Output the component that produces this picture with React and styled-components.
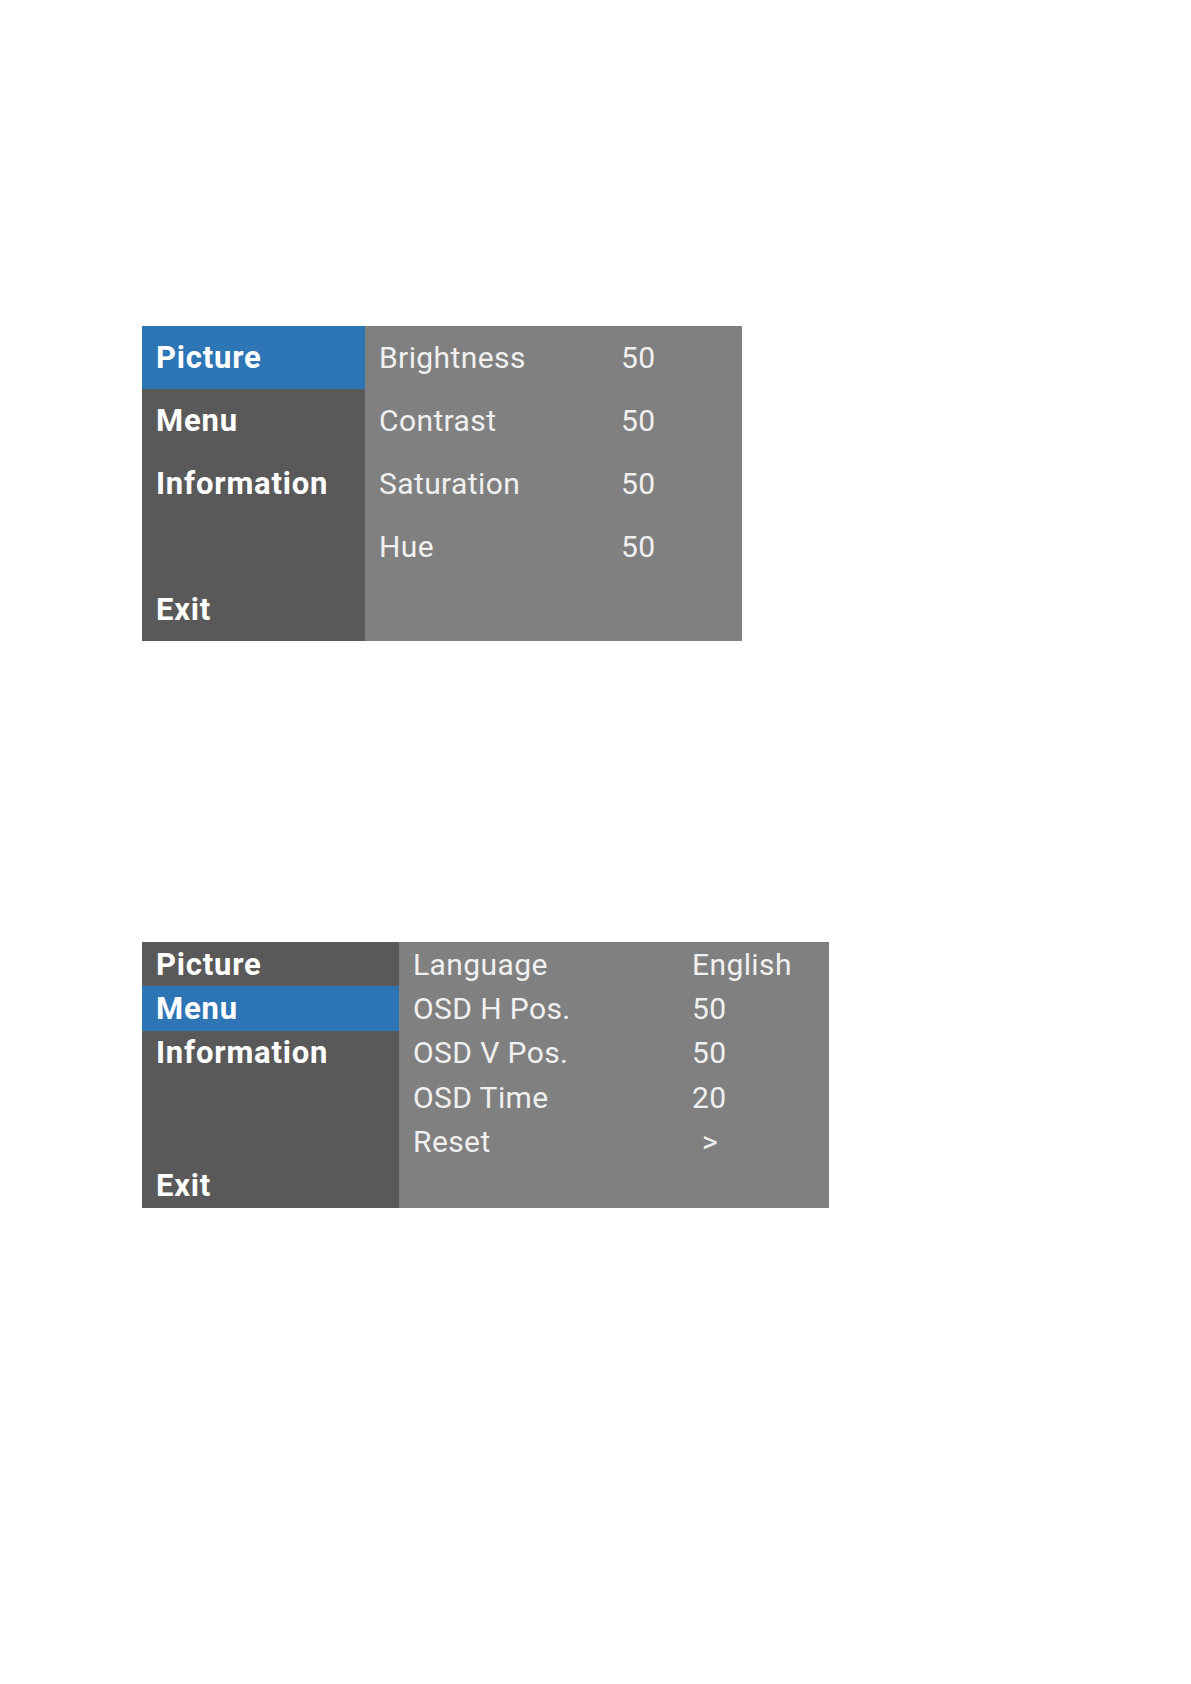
import React from 'react';
import styled, { createGlobalStyle } from 'styled-components';

const GlobalStyle = createGlobalStyle`
    html, body {
        margin: 0;
        padding: 0;
        background: #ffffff;
    }
    body {
        font-family: Roboto, "Liberation Sans", sans-serif;
    }
`;

const Page = styled.div`
    width: 1191px;
    min-height: 1684px;
    box-sizing: border-box;
    padding: 326px 0 0 142px;
    display: flex;
    flex-direction: column;
    gap: 301px;
`;

const Panel = styled.div`
    display: grid;
    grid-template-columns: ${(p) => p.$navWidth}px 1fr;
    width: ${(p) => p.$width}px;
    background-color: #808080;
`;

const Sidebar = styled.div`
    display: flex;
    flex-direction: column;
    background-color: #595959;
`;

const NavItem = styled.div`
    height: ${(p) => p.$rowHeight}px;
    display: flex;
    align-items: center;
    padding-left: 14px;
    font-size: 31px;
    font-weight: 700;
    letter-spacing: 0.8px;
    color: #ffffff;
    background-color: ${(p) => (p.$active ? '#2e75b6' : 'transparent')};
`;

const Content = styled.div`
    display: flex;
    flex-direction: column;
`;

const SettingRow = styled.div`
    height: ${(p) => p.$rowHeight}px;
    display: grid;
    grid-template-columns: ${(p) => p.$labelWidth}px 1fr;
    align-items: center;
    padding-left: 14px;
    font-size: 30px;
    font-weight: 400;
    letter-spacing: 0.4px;
    color: #f0f0f0;
`;

const Value = styled.span`
    padding-left: ${(p) => (p.$arrow ? 10 : 0)}px;
`;

const menus = [
    {
        width: 600,
        navWidth: 223,
        rowHeight: 63,
        labelWidth: 242,
        nav: ['Picture', 'Menu', 'Information', null, 'Exit'],
        active: 'Picture',
        settings: [
            ['Brightness', '50'],
            ['Contrast', '50'],
            ['Saturation', '50'],
            ['Hue', '50'],
        ],
    },
    {
        width: 687,
        navWidth: 257,
        rowHeight: 44.33,
        labelWidth: 279,
        nav: ['Picture', 'Menu', 'Information', null, null, 'Exit'],
        active: 'Menu',
        settings: [
            ['Language', 'English'],
            ['OSD H Pos.', '50'],
            ['OSD V Pos.', '50'],
            ['OSD Time', '20'],
            ['Reset', '>'],
        ],
    },
];

function OsdMenu({ menu }) {
    const rows = menu.nav.length;
    return (
        <Panel $width={menu.width} $navWidth={menu.navWidth}>
            <Sidebar>
                {menu.nav.map((label, i) => (
                    <NavItem key={i} $rowHeight={menu.rowHeight} $active={label === menu.active}>
                        {label}
                    </NavItem>
                ))}
            </Sidebar>
            <Content>
                {Array.from({ length: rows }).map((_, i) => {
                    const item = menu.settings[i];
                    return (
                        <SettingRow key={i} $rowHeight={menu.rowHeight} $labelWidth={menu.labelWidth}>
                            {item && <span>{item[0]}</span>}
                            {item && <Value $arrow={item[1] === '>'}>{item[1]}</Value>}
                        </SettingRow>
                    );
                })}
            </Content>
        </Panel>
    );
}

export default function App() {
    return (
        <>
            <GlobalStyle />
            <Page>
                {menus.map((menu, i) => (
                    <OsdMenu key={i} menu={menu} />
                ))}
            </Page>
        </>
    );
}
